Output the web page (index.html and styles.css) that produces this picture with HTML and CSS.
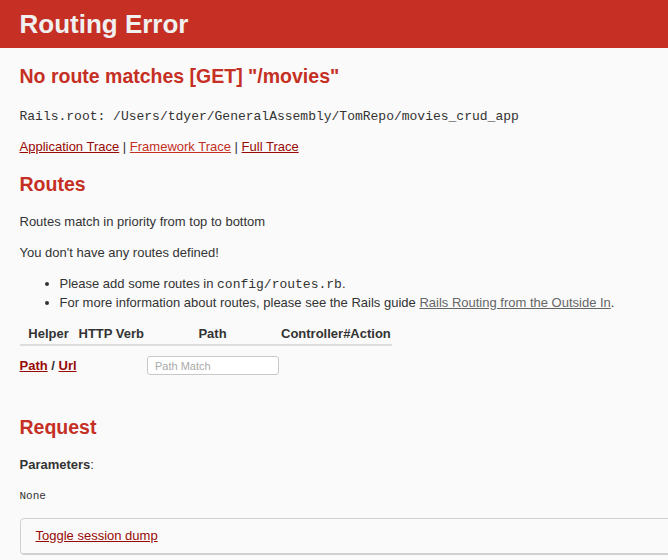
FILE: index.html
```html
<!DOCTYPE html>
<html>
<head>
<meta charset="utf-8">
<title>Routing Error</title>
<link rel="stylesheet" href="styles.css">
</head>
<body>
<header class="header">
  <h1 class="title">Routing Error</h1>
</header>
<div class="container">
  <h2 class="heading">No route matches [GET] "/movies"</h2>
  <p class="text text-root"><code class="root">Rails.root: /Users/tdyer/GeneralAssembly/TomRepo/movies_crud_app</code></p>
  <p class="text text-links"><a href="#" class="link">Application Trace</a> | <a href="#" class="link link-bright">Framework Trace</a> | <a href="#" class="link">Full Trace</a></p>

  <h2 class="heading heading-routes">Routes</h2>
  <p class="text">Routes match in priority from top to bottom</p>
  <p class="text">You don't have any routes defined!</p>
  <ul class="list">
    <li>Please add some routes in <code class="mono">config/routes.rb</code>.</li>
    <li>For more information about routes, please see the Rails guide <a href="#" class="link link-visited">Rails Routing from the Outside In</a>.</li>
  </ul>
  <table class="route-table">
    <thead>
      <tr class="head-row">
        <th class="col-helper">Helper</th>
        <th class="col-verb">HTTP Verb</th>
        <th class="col-path">Path</th>
        <th class="col-action">Controller#Action</th>
      </tr>
      <tr class="search-row">
        <th class="helper-links"><a href="#" class="link">Path</a> / <a href="#" class="link">Url</a></th>
        <th></th>
        <th><input class="search" type="search" placeholder="Path Match"></th>
        <th></th>
      </tr>
    </thead>
  </table>

  <h2 class="heading heading-request">Request</h2>
  <p class="text"><b>Parameters</b>:</p>
  <pre class="pre">None</pre>
  <div class="details">
    <div class="summary"><a href="#" class="link">Toggle session dump</a></div>
  </div>
</div>
</body>
</html>
```

FILE: styles.css
```css
html {
  overflow: hidden;
}
body {
  background-color: #FAFAFA;
  color: #333;
  margin: 0;
  font-family: "Liberation Sans", Arial, Helvetica, sans-serif;
  font-size: 13px;
  line-height: 18px;
}
.header {
  color: #F0F0F0;
  background: #C52F24;
  padding: 0 19.5px;
  height: 48px;
  display: flex;
  align-items: center;
}
.title {
  margin: 0;
  font-size: 26px;
  line-height: 28px;
  font-weight: bold;
}
.container {
  padding: 0 19.5px;
}
.heading {
  color: #C52F24;
  font-size: 19.5px;
  line-height: 25px;
  margin: 16.2px 0;
  font-weight: bold;
}
.heading-routes {
  margin-top: 16.2px;
}
.heading-request {
  margin-top: 30px;
}
.text {
  margin: 13px 0;
}
.text-root {
  margin-top: 17.5px;
  margin-bottom: 12px;
}
.text-links {
  margin-top: 12px;
  margin-bottom: 13px;
}
.root, .mono {
  font-family: "Liberation Mono", "Courier New", monospace;
  font-size: 13px;
}
.link {
  color: #980905;
}
.link-bright {
  color: #C52F24;
}
.link-visited {
  color: #666;
}
.list {
  margin: 13px 0;
  padding-left: 40px;
}
.route-table {
  margin: 0;
  border-collapse: collapse;
}
.route-table th {
  padding: 0 1px 1px;
  font-weight: bold;
  white-space: nowrap;
}
.head-row {
  border-bottom: 2px solid #ddd;
}
.col-helper { width: 56px; }
.col-verb { width: 65px; }
.col-path { width: 133px; }
.col-action { width: 108px; }
.route-table .search-row th {
  padding: 10px 0;
  line-height: 15px;
}
.helper-links {
  text-align: left;
}
.search {
  width: 132px;
  height: 19px;
  box-sizing: border-box;
  border: 1px solid #c8c8c8;
  border-radius: 3px;
  background: #fff;
  font-family: "Liberation Sans", Arial, sans-serif;
  font-size: 11px;
  padding: 0 7px;
  margin: 0 0 0 1px;
  vertical-align: middle;
  -webkit-appearance: none;
}
.search::placeholder {
  color: #a9a9a9;
}
.pre {
  font-family: "Liberation Mono", "Courier New", monospace;
  font-size: 11px;
  margin: 11px 0;
}
.details {
  border: 1px solid #D0D0D0;
  border-radius: 4px;
  margin: 13px 0;
  width: 978px;
}
.summary {
  padding: 8px 15px;
  border-bottom: 1px solid #D0D0D0;
}
```
